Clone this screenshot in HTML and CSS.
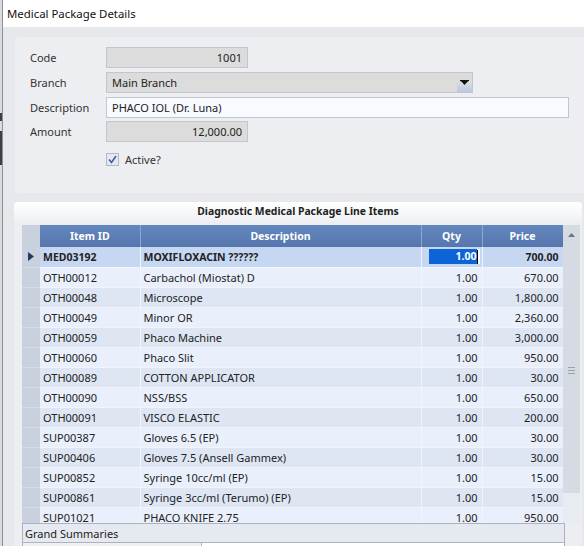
FILE: index.html
```html
<!DOCTYPE html>
<html>
<head>
<meta charset="utf-8">
<link rel="stylesheet" href="styles.css">
</head>
<body>
<div class="screen">
  <div class="backdrop"><span class="bd-mark m1"></span><span class="bd-mark m2"></span></div>
  <div class="window">
    <div class="titlebar">Medical Package Details</div>
    <div class="content">
      <div class="panel form-panel">
        <div class="form">
          <label class="lbl">Code</label>
          <div class="field ro num short">1001</div>
          <label class="lbl">Branch</label>
          <div class="field ro select">
            <span class="sel-text">Main Branch</span>
            <span class="sel-btn"><svg width="9" height="6" viewBox="0 0 9 6"><path d="M0 0H9L4.5 5Z" fill="#111"/><rect x="0" y="0" width="9" height="1.2" fill="#111"/></svg></span>
          </div>
          <label class="lbl">Description</label>
          <div class="field edit long">PHACO IOL (Dr. Luna)</div>
          <label class="lbl amt">Amount</label>
          <div class="field ro num short amt">12,000.00</div>
          <span></span>
          <div class="check-row">
            <span class="checkbox"><svg width="11" height="11" viewBox="0 0 11 11"><path d="M2 5.5L4.5 8.5L9 2" fill="none" stroke="#3a5aa8" stroke-width="1.5"/></svg></span>
            <span class="check-label">Active?</span>
          </div>
        </div>
      </div>

      <div class="panel grid-panel">
        <div class="grid-title">Diagnostic Medical Package Line Items</div>
        <div class="grid-area">
          <div class="grid-wrap">
            <table class="grid">
              <colgroup>
                <col class="c-ind"><col class="c-id"><col class="c-desc"><col class="c-qty"><col class="c-price">
              </colgroup>
              <thead>
                <tr><th class="ind"></th><th>Item ID</th><th>Description</th><th>Qty</th><th>Price</th></tr>
              </thead>
              <tbody>
                <tr class="sel"><td class="ind"><svg width="6" height="9" viewBox="0 0 6 9"><path d="M0 0L6 4.5L0 9Z" fill="#23395e"/></svg></td><td>MED03192</td><td>MOXIFLOXACIN ??????</td><td class="n qty-edit"><span class="qty-box"><span class="hl">1.00</span><span class="caret"></span></span></td><td class="n">700.00</td></tr>
                <tr class="lt"><td class="ind"></td><td>OTH00012</td><td>Carbachol (Miostat) D</td><td class="n">1.00</td><td class="n">670.00</td></tr>
                <tr class="dk"><td class="ind"></td><td>OTH00048</td><td>Microscope</td><td class="n">1.00</td><td class="n">1,800.00</td></tr>
                <tr class="lt"><td class="ind"></td><td>OTH00049</td><td>Minor OR</td><td class="n">1.00</td><td class="n">2,360.00</td></tr>
                <tr class="dk"><td class="ind"></td><td>OTH00059</td><td>Phaco Machine</td><td class="n">1.00</td><td class="n">3,000.00</td></tr>
                <tr class="lt"><td class="ind"></td><td>OTH00060</td><td>Phaco Slit</td><td class="n">1.00</td><td class="n">950.00</td></tr>
                <tr class="dk"><td class="ind"></td><td>OTH00089</td><td>COTTON APPLICATOR</td><td class="n">1.00</td><td class="n">30.00</td></tr>
                <tr class="lt"><td class="ind"></td><td>OTH00090</td><td>NSS/BSS</td><td class="n">1.00</td><td class="n">650.00</td></tr>
                <tr class="dk"><td class="ind"></td><td>OTH00091</td><td>VISCO ELASTIC</td><td class="n">1.00</td><td class="n">200.00</td></tr>
                <tr class="lt"><td class="ind"></td><td>SUP00387</td><td>Gloves 6.5 (EP)</td><td class="n">1.00</td><td class="n">30.00</td></tr>
                <tr class="dk"><td class="ind"></td><td>SUP00406</td><td>Gloves 7.5 (Ansell Gammex)</td><td class="n">1.00</td><td class="n">30.00</td></tr>
                <tr class="lt"><td class="ind"></td><td>SUP00852</td><td>Syringe 10cc/ml (EP)</td><td class="n">1.00</td><td class="n">15.00</td></tr>
                <tr class="dk"><td class="ind"></td><td>SUP00861</td><td>Syringe 3cc/ml (Terumo) (EP)</td><td class="n">1.00</td><td class="n">15.00</td></tr>
                <tr class="lt"><td class="ind"></td><td>SUP01021</td><td>PHACO KNIFE 2.75</td><td class="n">1.00</td><td class="n">950.00</td></tr>
              </tbody>
            </table>
          </div>
          <div class="scrollbar">
            <div class="sb-up"><svg width="7" height="4" viewBox="0 0 7 4"><path d="M0 4L3.5 0L7 4Z" fill="#6b7280"/></svg></div>
            <div class="sb-thumb"><span class="grip"></span><span class="grip"></span><span class="grip"></span></div>
            <div class="sb-track"></div>
          </div>
        </div>
        <div class="summaries">
          <div class="sum-title">Grand Summaries</div>
          <div class="sum-row"><span class="sum-left"></span><span class="sum-right"></span></div>
        </div>
      </div>
    </div>
  </div>
</div>
</body>
</html>
```
FILE: styles.css
```css
* { box-sizing: border-box; }
html, body { margin: 0; padding: 0; }
body {
  width: 584px;
  height: 546px;
  overflow: hidden;
  font-family: "Noto Sans", "Open Sans", sans-serif;
  font-size: 11px;
  color: #222;
}
.screen {
  display: flex;
  width: 584px;
  height: 546px;
}
.backdrop {
  width: 3px;
  flex: none;
  background: #d9dbdf;
  display: flex;
  flex-direction: column;
  border-right: 1px solid #8d9096;
}
.bd-mark { display: block; width: 2px; background: #3c3f46; }
.bd-mark.m1 { margin-top: 113px; height: 8px; }
.bd-mark.m2 { margin-top: 10px; height: 34px; }
.window {
  flex: 1;
  min-width: 0;
  display: flex;
  flex-direction: column;
  background: #e6e8ec;
  overflow: hidden;
}
.titlebar {
  height: 27px;
  flex: none;
  background: #ffffff;
  padding-left: 4px;
  line-height: 27px;
  font-size: 11.4px;
  color: #111;
}
.content {
  flex: 1;
  display: flex;
  flex-direction: column;
  padding-top: 10px;
}
.panel {
  background: #eceef1;
  border-radius: 4px;
}
.form-panel {
  margin-left: 12px;
  width: 590px;
  height: 156px;
  flex: none;
  padding: 10px 0 0 15px;
}
.form {
  display: grid;
  grid-template-columns: 76px auto;
  grid-auto-rows: 21px;
  row-gap: 4px;
  align-items: center;
}
.lbl { color: #333; font-size: 11px; line-height: 21px; }
.field {
  height: 21px;
  border: 1px solid #c3c6cc;
  line-height: 19px;
  padding: 0 5px;
  font-size: 11px;
  color: #222;
}
.field.ro { background: #dcdcdc; }
.field.edit { background: #f7faff; width: 463px; }
.field.num { text-align: right; }
.field.short { width: 142px; }
.field.amt { margin-top: -2px; }
.lbl.amt { margin-top: -2px; }
.select {
  width: 367px;
  display: flex;
  padding-right: 0;
}
.sel-text { flex: 1; }
.sel-btn {
  width: 15px;
  height: 19px;
  background: linear-gradient(#dcdcdc 0%, #dcdcdc 50%, #b9c7e2 100%);
  display: flex;
  align-items: center;
  justify-content: center;
  padding-top: 1px;
}
.check-row {
  display: flex;
  align-items: center;
  gap: 6px;
  margin-top: 4px;
}
.checkbox {
  width: 13px;
  height: 13px;
  border: 1px solid #b3b8c2;
  background: #e4e8f0;
  display: flex;
  align-items: center;
  justify-content: center;
}
.check-label { color: #333; }

.grid-panel {
  margin-left: 11px;
  margin-top: 9px;
  width: 568px;
  flex: 1;
  display: flex;
  flex-direction: column;
  border-radius: 4px 4px 0 0;
}
.grid-title {
  height: 20px;
  line-height: 19px;
  text-align: center;
  font-weight: bold;
  font-size: 10.4px;
  color: #222;
  background: linear-gradient(#ffffff, #eef0f3);
  border-radius: 4px 4px 0 0;
}
.grid-area {
  display: flex;
  margin: 3px 0 0 8px;
  height: 298px;
  flex: none;
}
.grid-wrap {
  width: 541px;
  height: 298px;
  overflow: hidden;
}
.grid {
  border-collapse: collapse;
  table-layout: fixed;
  width: 541px;
  font-size: 11px;
}
.c-ind { width: 18px; }
.c-id { width: 100px; }
.c-desc { width: 281px; }
.c-qty { width: 61px; }
.c-price { width: 81px; }
.grid th {
  height: 22px;
  background: linear-gradient(#6387bf, #5576ad);
  color: #fff;
  font-weight: bold;
  font-size: 10.5px;
  border-right: 1px solid #8fa7cf;
  padding: 0;
  text-align: center;
}
.grid th.ind { background: #c9d1de; border-right: none; }
.grid td {
  height: 20px;
  padding: 0 4px 0 3px;
  border-right: 1px solid #f1f4fa;
  border-bottom: 1px solid #f1f4fa;
  white-space: nowrap;
  overflow: hidden;
  color: #222;
}
.grid td.n { text-align: right; }
.grid td.ind {
  background: #c9d1de;
  border-right: none;
  border-bottom: 1px solid #d6dce6;
  padding: 0 0 0 6px;
}
.grid tr.lt td:not(.ind) { background: #eaf0fb; }
.grid tr.dk td:not(.ind) { background: #dee6f4; }
.grid tr.sel td:not(.ind) { background: #c6d7f2; font-weight: bold; font-size: 10.5px; }
.grid td.qty-edit { padding: 2px 2px 2px 7px; }
.qty-box {
  display: flex;
  justify-content: flex-end;
  align-items: center;
  background: #fff;
  height: 15px;
  padding-right: 2px;
}
.hl {
  background: #0c64d6;
  color: #fff;
  flex: 1;
  text-align: right;
  line-height: 15px;
}
.caret { width: 1px; height: 14px; background: #000; }
.scrollbar {
  width: 17px;
  display: flex;
  flex-direction: column;
  background: #e8ebef;
}
.sb-up {
  height: 22px;
  background: #d6dbe3;
  display: flex;
  justify-content: center;
  padding-top: 8px;
}
.sb-thumb {
  height: 246px;
  background: #d6dbe3;
  display: flex;
  flex-direction: column;
  align-items: center;
  justify-content: center;
  gap: 2px;
}
.grip { width: 7px; height: 1px; background: #9aa1ad; }
.sb-track { flex: 1; }
.summaries {
  margin-left: 8px;
  width: 543px;
}
.sum-title {
  height: 20px;
  line-height: 19px;
  border: 1px solid #aab3c1;
  background: #e6e9ef;
  padding-left: 2px;
  color: #222;
}
.sum-row { display: flex; height: 10px; }
.sum-left { width: 180px; border: 1px solid #aab3c1; border-top: none; background: #eef0f4; }
.sum-right { flex: 1; background: #fff; border-right: 1px solid #aab3c1; }
```
